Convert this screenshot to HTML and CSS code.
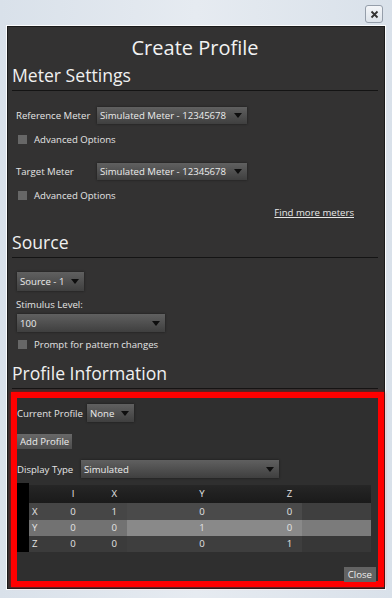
FILE: index.html
```html
<!DOCTYPE html>
<html lang="en">
<head>
  <meta charset="UTF-8">
  <title>Create Profile</title>
  <link rel="stylesheet" href="styles.css">
</head>
<body>
  <div class="frame">
    <div class="titlebar">
      <button class="close-x" title="Close">
        <svg width="9" height="9" viewBox="0 0 9 9"><path d="M1.5 1.5 L7.5 7.5 M7.5 1.5 L1.5 7.5" stroke="#333" stroke-width="1.8"/></svg>
      </button>
    </div>

    <div class="client">
      <h1>Create Profile</h1>

      <h2>Meter Settings</h2>
      <div class="row r-ref">
        <span class="label w-meter">Reference Meter</span>
        <div class="select s-meter"><span>Simulated Meter - 12345678</span><i class="arrow"></i></div>
      </div>
      <div class="check r-chk1"><i class="box"></i>Advanced Options</div>
      <div class="row r-target">
        <span class="label w-meter">Target Meter</span>
        <div class="select s-meter"><span>Simulated Meter - 12345678</span><i class="arrow"></i></div>
      </div>
      <div class="check r-chk2"><i class="box"></i>Advanced Options</div>
      <div class="link-row"><a href="#">Find more meters</a></div>

      <h2 class="h-source">Source</h2>
      <div class="row r-source">
        <div class="select s-source"><span>Source - 1</span><i class="arrow"></i></div>
      </div>
      <div class="row r-stim"><span class="label">Stimulus Level:</span></div>
      <div class="row r-level">
        <div class="select s-level"><span>100</span><i class="arrow"></i></div>
      </div>
      <div class="check r-chk3"><i class="box"></i>Prompt for pattern changes</div>

      <h2 class="h-profile">Profile Information</h2>

      <div class="highlight">
        <div class="row r-current">
          <span class="label w-current">Current Profile</span>
          <div class="select s-none"><span>None</span><i class="arrow"></i></div>
        </div>
        <div class="row r-add"><button class="btn">Add Profile</button></div>
        <div class="row r-display">
          <span class="label w-display">Display Type</span>
          <div class="select s-display"><span>Simulated</span><i class="arrow"></i></div>
        </div>

        <div class="grid">
          <div class="grid-row head">
            <span class="c1"></span><span class="c2">I</span><span class="c3">X</span><span class="c4">Y</span><span class="c5">Z</span><span class="c6"></span>
          </div>
          <div class="grid-row odd">
            <span class="c0"></span><span class="c1">X</span><span class="c2">0</span><span class="c3">1</span><span class="c4">0</span><span class="c5">0</span><span class="c6"></span>
          </div>
          <div class="grid-row sel">
            <span class="c0"></span><span class="c1">Y</span><span class="c2">0</span><span class="c3">0</span><span class="c4">1</span><span class="c5">0</span><span class="c6"></span>
          </div>
          <div class="grid-row even">
            <span class="c0"></span><span class="c1">Z</span><span class="c2">0</span><span class="c3">0</span><span class="c4">0</span><span class="c5">1</span><span class="c6"></span>
          </div>
        </div>

        <div class="footer"><button class="btn close">Close</button></div>
      </div>
    </div>
  </div>
</body>
</html>
```
FILE: styles.css
```css
body {
  margin: 0;
  padding: 0;
  font-family: "Open Sans", Arial, sans-serif;
  background: linear-gradient(90deg, #d9e1ea, #e6ebf1 50%, #d9e1ea);
  overflow: hidden;
}

.frame {
  padding: 0 6px 6px;
}

.titlebar {
  height: 25px;
  display: flex;
  justify-content: flex-end;
  align-items: flex-start;
}

.close-x {
  width: 18px;
  height: 18px;
  margin: 5px 3px 0 0;
  padding: 0;
  border: 1px solid #959eaa;
  border-radius: 3px;
  background: linear-gradient(#f4f6f9, #dde3ea);
  display: flex;
  align-items: center;
  justify-content: center;
}

.client {
  height: 563px;
  border: 1px solid #fbfcfd;
  box-shadow: inset 0 0 0 1px #1b1b1b;
  background-color: #333232;
  padding: 0 7px 0 5px;
  color: #e4e4e4;
  font-size: 9.6px;
}

h1 {
  margin: 0;
  padding-top: 10px;
  height: 24px;
  line-height: 24px;
  text-align: center;
  font-size: 20px;
  font-weight: normal;
  color: #f2f2f2;
}

h2 {
  margin: 4px 0 0;
  height: 22px;
  line-height: 22px;
  padding-bottom: 4px;
  border-bottom: 1px solid #141414;
  font-size: 17.6px;
  font-weight: normal;
  color: #f0f0f0;
}

.h-source { margin-top: 11px; }
.h-profile { margin-top: 11px; }

.row {
  display: flex;
  align-items: center;
  padding-left: 4px;
}

.label {
  white-space: nowrap;
}

.w-meter { width: 81px; }
.w-current { width: 70px; }
.w-display { width: 64px; }

.select {
  display: flex;
  align-items: center;
  justify-content: space-between;
  box-sizing: border-box;
  padding: 0 5px 0 3px;
  background: linear-gradient(#606060, #3f3f3f);
  box-shadow: 0 0 2px #1a1a1a;
  color: #ececec;
  white-space: nowrap;
}

.arrow {
  width: 0;
  height: 0;
  border-left: 4px solid transparent;
  border-right: 4px solid transparent;
  border-top: 5px solid #0e0e0e;
}

.s-meter { width: 150px; height: 17px; }
.s-source { width: 67px; height: 19px; margin-left: 1px; }
.s-level { width: 148px; height: 18px; margin-left: 1px; }
.s-none { width: 47px; height: 18px; }
.s-display { width: 198px; height: 18px; }

.r-ref { margin-top: 16px; }
.r-target { margin-top: 17px; }
.r-source { margin-top: 14px; }
.r-stim { margin-top: 6px; height: 14px; }
.r-level { margin-top: 3px; }

.check {
  display: flex;
  align-items: center;
  height: 14px;
  padding-left: 6px;
}

.box {
  width: 9px;
  height: 9px;
  margin-right: 7px;
  background-color: #676767;
}

.r-chk1, .r-chk2 { margin-top: 8px; }
.r-chk3 { margin-top: 5px; }

.link-row {
  margin-top: 4px;
  height: 14px;
  line-height: 14px;
  text-align: right;
  padding-right: 24px;
}

.link-row a {
  color: #e8e8e8;
  text-decoration: underline;
}

/* red highlight round the profile block */
.highlight {
  margin: 3px -6px 0 -1px;
  height: 183px;
  border: 6px solid #ff0000;
  box-shadow: 0 0 3px #b00000;
  background-color: #2f2f2f;
}

.highlight .row { padding-left: 0; }

.r-current { margin-top: 6px; }
.r-add { margin-top: 12px; }
.r-display { margin-top: 11px; }

.btn {
  height: 15px;
  padding: 0 3px;
  border: none;
  background: linear-gradient(#686868, #4d4d4d);
  color: #ececec;
  font-family: inherit;
  font-size: 9.6px;
  line-height: 15px;
}

.grid {
  margin-top: 5px;
  padding-top: 2px;
  background: linear-gradient(90deg, #000 12px, transparent 12px);
  width: 354px;
}

.grid-row {
  display: grid;
  grid-template-columns: 12px 28px 32px 38px 150px 25px 69px;
  height: 16px;
  line-height: 16px;
}

.grid-row span { text-align: center; }
.grid-row .c1 { text-align: left; padding-left: 3px; }
.grid-row .c3 { text-align: right; padding-right: 10px; }

.head {
  height: 18px;
  line-height: 18px;
  margin-left: 12px;
  background: linear-gradient(#262626, #1a1a1a);
  grid-template-columns: 28px 32px 38px 150px 25px 69px;
}

.odd { height: 17px; line-height: 17px; }
.odd .c1, .odd .c2, .odd .c3 { background-color: #464646; }
.odd .c4, .odd .c5 { background-color: #4a4a4a; }
.odd .c6 { background-color: #3f3f3f; }

.sel .c1, .sel .c2, .sel .c3 { background-color: #727272; }
.sel .c4, .sel .c5 { background-color: #898989; }
.sel .c6 { background-color: #7b7b7b; }

.even .c1, .even .c2, .even .c3 { background-color: #3b3b3b; }
.even .c4, .even .c5 { background-color: #3e3e3e; }
.even .c6 { background-color: #373737; }

.footer {
  margin-top: 15px;
  display: flex;
  justify-content: flex-end;
  padding-right: 2px;
}

.close {
  background: #636363;
  padding: 0 4px;
}
```
